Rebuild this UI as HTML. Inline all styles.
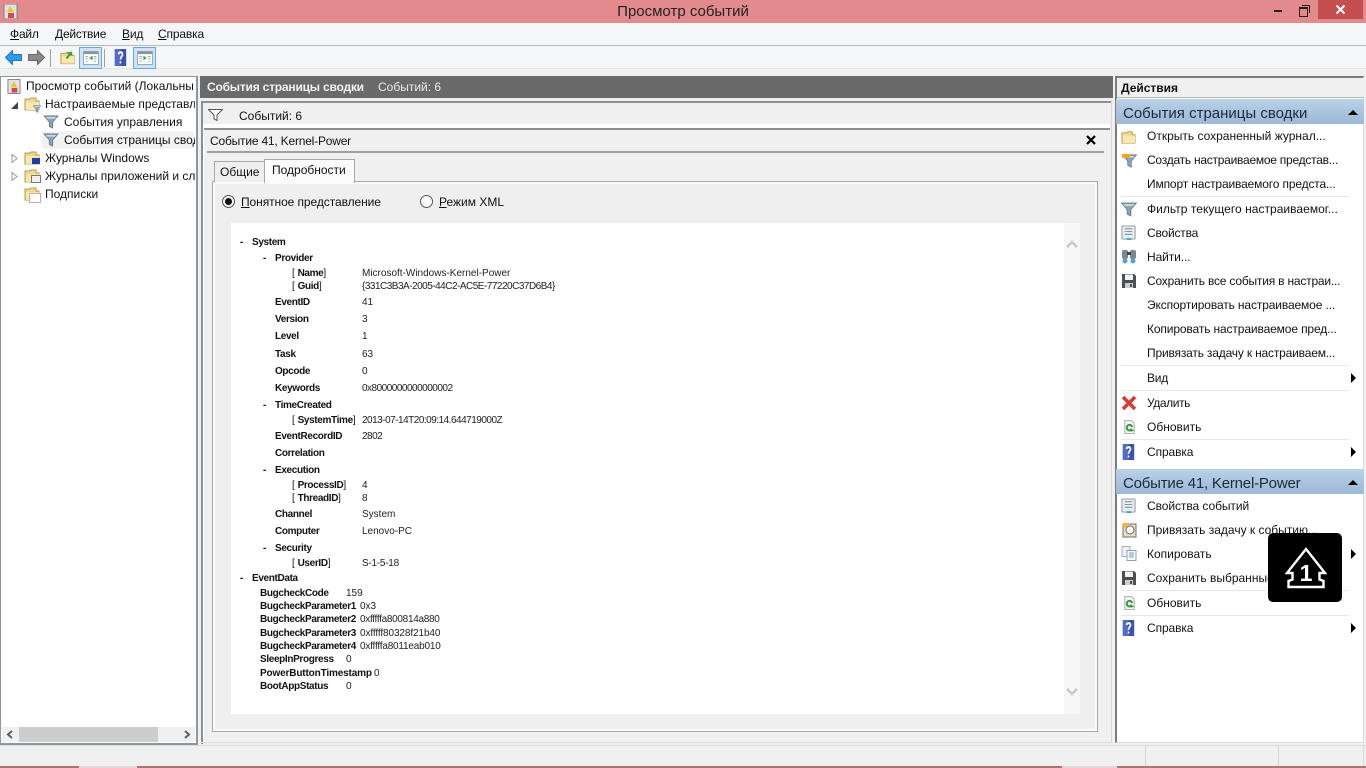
<!DOCTYPE html>
<html lang="ru"><head><meta charset="utf-8"><title>Просмотр событий</title>
<style>
html,body{margin:0;padding:0;width:1366px;height:768px;overflow:hidden;background:#f0f0f0}
body{position:relative;font:12px/16px "Liberation Sans","DejaVu Sans",sans-serif;color:#111}
.a,.t,.b,.v,svg{position:absolute}
.t,.b,.v{white-space:nowrap}
.b{font-weight:bold;font-size:10px;line-height:14px;color:#111;letter-spacing:-.35px}
.v{font-size:10px;line-height:14px;color:#222}
.d{letter-spacing:-.5px}
.b span{letter-spacing:0}
u{text-decoration:underline}
.sep{position:absolute;left:1121px;width:228px;height:1px;background:#e8e8e8}
.h{position:absolute;left:1116px;width:248px;height:25px;background:linear-gradient(#b9d1e8,#9db8d6)}
.h span{position:absolute;left:7px;top:6px;font-size:15px;line-height:18px;color:#1a2a3a;white-space:nowrap}
.tri{position:absolute;width:0;height:0;border-left:5px solid #000;border-top:5px solid transparent;border-bottom:5px solid transparent;left:1351px}
.up{position:absolute;left:1348px;width:0;height:0;border-left:5px solid transparent;border-right:5px solid transparent;border-bottom:5px solid #000}
</style></head><body>

<svg width="0" height="0" style="position:absolute">
<defs>
<symbol id="fun" viewBox="0 0 16 16"><path d="M0 1H16L10 8V15L6 13V8Z" fill="#8ba3b3" stroke="#56707f" stroke-width=".8"/><path d="M2 2.500H14L12.500 4H3.500Z" fill="#e4edf2"/></symbol>
<symbol id="fold" viewBox="0 0 16 16"><path d="M1 3H6L7 2H12V5H15V14H1Z" fill="#f2d88e" stroke="#b79b55"/><path d="M2 6H15V14H2Z" fill="#f8e7ae"/></symbol>
<symbol id="prop" viewBox="0 0 16 16"><rect x="1" y="1" width="14" height="14" rx="1" fill="#e8edf0" stroke="#8a949c"/><path d="M4 4H12M4 7H12M4 10H12" stroke="#7c8a96"/><rect x="6" y="14" width="5" height="2" fill="#39a9dc"/></symbol>
<symbol id="disk" viewBox="0 0 16 16"><path d="M1 1H13L15 3V15H1Z" fill="#4b4f52"/><rect x="4" y="1.500" width="8" height="5.500" fill="#f2f2f2"/><rect x="4" y="10" width="8" height="5" fill="#cfcfcf"/><rect x="9" y="11" width="2" height="3" fill="#4b4f52"/></symbol>
<symbol id="ref" viewBox="0 0 16 16"><path d="M3 1H10L13 4V15H3Z" fill="#f5f5f5" stroke="#a9a9a9"/><path d="M11 8A3 3 0 1 0 10 11" fill="none" stroke="#2a9d34" stroke-width="2"/><path d="M9 9L13 12L9 13Z" fill="#2a9d34"/></symbol>
<symbol id="hlp" viewBox="0 0 16 16"><rect x="1" width="14" height="16" fill="#3a53ad"/><rect x="1" width="7" height="16" fill="#4f6cc7"/><path d="M5.500 5C6 2.500 10.500 2.500 10.500 5C10.500 7 8 7 8 10" fill="none" stroke="#fff" stroke-width="2"/><rect x="7" y="11.500" width="2" height="2" fill="#fff"/></symbol>
<symbol id="win" viewBox="0 0 20 18"><rect x=".5" y=".5" width="19" height="17" fill="#fff" stroke="#858d93"/><rect x="1" y="1" width="18" height="3" fill="#8d959b"/><path d="M3 7H6M3 10H6M3 13H6M14 7H17M14 10H17M14 13H17" stroke="#7d93aa"/></symbol>
</defs>
</svg>

<!-- title bar -->
<div class="a" style="left:0;top:0;width:1366px;height:23px;background:#e28a8c"></div>
<svg style="left:3px;top:4px" width="15" height="15" viewBox="0 0 15 15"><rect x="1" y="0" width="13" height="15" fill="#dfe3e8" stroke="#7b8290"/><path d="M7 2L11 8H4Z" fill="#f5c518"/><rect x="5" y="9" width="6" height="5" fill="#d8484a"/></svg>
<div class="t" style="left:0;top:3px;width:1366px;text-align:center;font-size:15px;line-height:18px;color:#222">Просмотр событий</div>
<div class="a" style="left:1274px;top:10px;width:8px;height:2px;background:#222"></div>
<div class="a" style="left:1299px;top:7px;width:7px;height:7px;border:1px solid #222;border-top-width:2px"></div>
<div class="a" style="left:1302px;top:5px;width:7px;height:7px;border:1px solid #222;border-left:0;border-bottom:0"></div>
<div class="a" style="left:1318px;top:0;width:45px;height:19px;background:#c54e50"></div>
<svg style="left:1335px;top:4px" width="11" height="11" viewBox="0 0 11 11"><path d="M1.500 1.500L9.500 9.500M9.500 1.500L1.500 9.500" stroke="#fff" stroke-width="2"/></svg>

<!-- menu -->
<div class="a" style="left:0;top:23px;width:1366px;height:22px;background:#f5f6f7;border-bottom:1px solid #b9b9b9"></div>
<div class="t" style="left:10px;top:26px;letter-spacing:-.2px"><u>Ф</u>айл</div>
<div class="t" style="left:55px;top:26px;letter-spacing:-.2px"><u>Д</u>ействие</div>
<div class="t" style="left:122px;top:26px;letter-spacing:-.2px"><u>В</u>ид</div>
<div class="t" style="left:158px;top:26px;letter-spacing:-.15px"><u>С</u>правка</div>

<!-- toolbar -->
<div class="a" style="left:0;top:46px;width:1366px;height:22px;background:#f5f6f7;border-bottom:1px solid #e4e4e4"></div>
<svg style="left:5px;top:50px" width="17" height="15" viewBox="0 0 17 15"><path d="M0.500 7.500L7.500 .5V4.500H16.500V10.500H7.500V14.500Z" fill="#2f9be8" stroke="#1f78c8"/></svg>
<svg style="left:28px;top:50px" width="17" height="15" viewBox="0 0 17 15"><path d="M16.500 7.500L9.500 .5V4.500H.5V10.500H9.500V14.500Z" fill="#8a8a8a" stroke="#666"/></svg>
<div class="a" style="left:50px;top:49px;width:1px;height:18px;background:#a0a0a0"></div>
<svg style="left:60px;top:50px" width="15" height="16" viewBox="0 0 16 16"><use href="#fold"/><path d="M6 8L9 4L7 3L13 1L13 6L11 5L8 9Z" fill="#36a33a"/></svg>
<div class="a" style="left:79px;top:47px;width:21px;height:20px;background:#cde4f7;border:1px solid #66a7e8"></div>
<svg style="left:83px;top:51px" width="16" height="14" viewBox="0 0 20 18"><use href="#win"/><path d="M12 6V12L8 9Z" fill="#27a839"/></svg>
<div class="a" style="left:104px;top:49px;width:1px;height:18px;background:#a0a0a0"></div>
<svg style="left:114px;top:49px" width="13" height="17" viewBox="0 0 16 16" preserveAspectRatio="none"><use href="#hlp"/></svg>
<div class="a" style="left:133px;top:47px;width:21px;height:20px;background:#cde4f7;border:1px solid #66a7e8"></div>
<svg style="left:137px;top:51px" width="16" height="14" viewBox="0 0 20 18"><use href="#win"/><path d="M8 6V12L12 9Z" fill="#27a839"/></svg>

<!-- tree panel -->
<div class="a" style="left:0;top:76px;width:195px;height:666px;background:#fff;border:1px solid #8d979e;border-width:1px 2px 2px 1px"></div>
<svg style="left:7px;top:79px" width="14" height="15" viewBox="0 0 15 15"><rect x="1" y="0" width="13" height="15" fill="#dfe3e8" stroke="#7b8290"/><path d="M7 2L11 8H4Z" fill="#f5c518"/><rect x="5" y="9" width="6" height="5" fill="#d8484a"/></svg>
<div class="a" style="left:26px;top:78px;width:168px;height:16px;overflow:hidden"><span class="t" style="left:0;top:0">Просмотр событий (Локальны</span></div>
<div class="a" style="left:42px;top:131px;width:153px;height:18px;background:#f2f2f2"></div>
<svg style="left:11px;top:102px" width="7" height="7" viewBox="0 0 7 7"><path d="M7 0V7H0Z" fill="#444"/></svg>
<svg style="left:24px;top:96px" width="16" height="16"><use href="#fold"/></svg>
<svg style="left:33px;top:105px" width="8" height="8"><use href="#fun"/></svg>
<div class="a" style="left:45px;top:96px;width:150px;height:16px;overflow:hidden"><span class="t" style="left:0;top:0">Настраиваемые представле</span></div>
<svg style="left:43px;top:115px" width="16" height="14"><use href="#fun"/></svg>
<div class="t" style="left:64px;top:114px">События управления</div>
<svg style="left:43px;top:133px" width="16" height="14"><use href="#fun"/></svg>
<div class="a" style="left:64px;top:132px;width:131px;height:16px;overflow:hidden"><span class="t" style="left:0;top:0">События страницы свод</span></div>
<svg style="left:11px;top:154px" width="7" height="9" viewBox="0 0 7 9"><path d="M1 .5L6 4.500L1 8.500Z" fill="#fff" stroke="#9a9a9a"/></svg>
<svg style="left:24px;top:150px" width="16" height="16"><use href="#fold"/></svg>
<div class="a" style="left:32px;top:158px;width:8px;height:6px;background:#1d3fa8"></div>
<div class="t" style="left:45px;top:150px">Журналы Windows</div>
<svg style="left:11px;top:172px" width="7" height="9" viewBox="0 0 7 9"><path d="M1 .5L6 4.500L1 8.500Z" fill="#fff" stroke="#9a9a9a"/></svg>
<svg style="left:24px;top:168px" width="16" height="16"><use href="#fold"/></svg>
<div class="a" style="left:31px;top:175px;width:8px;height:6px;background:#f0f0f0;border:1px solid #777"></div>
<div class="a" style="left:45px;top:168px;width:150px;height:16px;overflow:hidden"><span class="t" style="left:0;top:0">Журналы приложений и сл</span></div>
<svg style="left:24px;top:186px" width="16" height="16"><use href="#fold"/></svg>
<div class="a" style="left:29px;top:193px;width:10px;height:8px;background:#fff;border:1px solid #c9a8a8"></div>
<div class="t" style="left:45px;top:186px">Подписки</div>
<!-- tree scrollbar -->
<div class="a" style="left:2px;top:727px;width:193px;height:15px;background:#f0f0f0"></div>
<div class="a" style="left:19px;top:727px;width:139px;height:15px;background:#cdcdcd"></div>
<svg style="left:6px;top:730px" width="8" height="9" viewBox="0 0 8 9"><path d="M6 1L2 4.500L6 8" fill="none" stroke="#606060" stroke-width="2"/></svg>
<svg style="left:183px;top:730px" width="8" height="9" viewBox="0 0 8 9"><path d="M2 1L6 4.500L2 8" fill="none" stroke="#606060" stroke-width="2"/></svg>

<!-- center -->
<div class="a" style="left:200px;top:76px;width:913px;height:22px;background:#6a6a6a"></div>
<div class="t" style="left:207px;top:79px;font-weight:bold;color:#f2f2f2;letter-spacing:-.2px">События страницы сводки</div>
<div class="t" style="left:378px;top:79px;color:#eaeaea">Событий: 6</div>
<div class="a" style="left:201px;top:101px;width:909px;height:641px;border:1px solid #8f8f8f;border-width:2px 0 0 2px"></div>
<div class="a" style="left:1111px;top:100px;width:1px;height:643px;background:#d8d8d8"></div>
<div class="a" style="left:201px;top:742px;width:911px;height:1px;background:#dcdcdc"></div>
<svg style="left:208px;top:109px" width="15" height="12" viewBox="0 0 15 12"><path d="M.5 .5H14.500L9 6V11.500L6 10V6Z" fill="#fff" stroke="#555"/></svg>
<div class="t" style="left:239px;top:108px">Событий: 6</div>
<div class="a" style="left:203px;top:124px;width:907px;height:4px;background:#fff"></div>
<div class="a" style="left:204px;top:128px;width:906px;height:2px;background:#8f8f8f"></div>
<div class="a" style="left:203px;top:128px;width:1px;height:610px;background:#fff"></div>
<div class="t" style="left:210px;top:133px;letter-spacing:-.2px">Событие 41, Kernel-Power</div>
<svg style="left:1086px;top:135px" width="10" height="10" viewBox="0 0 10 10"><path d="M1 1L9 9M9 1L1 9" stroke="#000" stroke-width="2.200"/></svg>
<div class="a" style="left:207px;top:151px;width:897px;height:2px;background:#a0a0a0"></div>
<div class="a" style="left:212px;top:181px;width:884px;height:549px;border:1px solid #a8a8a8;background:#efefef;box-shadow:inset 0 0 0 2px #fbfbfb"></div>
<div class="a" style="left:214px;top:161px;width:50px;height:20px;border:1px solid #a8a8a8;border-bottom:0;background:#efefef"></div>
<div class="t" style="left:220px;top:164px">Общие</div>
<div class="a" style="left:264px;top:159px;width:89px;height:23px;border:1px solid #a8a8a8;border-bottom:0;background:#fbfbfb"></div>
<div class="t" style="left:272px;top:162px">Подробности</div>
<div class="a" style="left:222px;top:195px;width:11px;height:11px;border:1px solid #555;border-radius:50%;background:#f2f2f2"></div>
<div class="a" style="left:225px;top:198px;width:7px;height:7px;border-radius:50%;background:#111"></div>
<div class="t" style="left:241px;top:194px;letter-spacing:-.08px"><u>П</u>онятное представление</div>
<div class="a" style="left:420px;top:195px;width:11px;height:11px;border:1px solid #555;border-radius:50%;background:#fff"></div>
<div class="t" style="left:439px;top:194px"><u>Р</u>ежим XML</div>

<div class="a" style="left:231px;top:223px;width:833px;height:491px;background:#fff"></div>
<div class="a" style="left:1064px;top:223px;width:16px;height:491px;background:#f7f7f7"></div>
<svg style="left:1066px;top:239px" width="12" height="9" viewBox="0 0 12 9"><path d="M1 8L6 3L11 8" fill="none" stroke="#c8c8c8" stroke-width="2.500"/></svg>
<svg style="left:1066px;top:688px" width="12" height="9" viewBox="0 0 12 9"><path d="M1 1L6 6L11 1" fill="none" stroke="#c8c8c8" stroke-width="2.500"/></svg>

<div class="b" style="left:240px;top:236px">-</div><div class="b" style="left:252px;top:236px">System</div>
<div class="b" style="left:263px;top:252px">-</div><div class="b" style="left:275px;top:252px">Provider</div>
<div class="b" style="left:292px;top:267px"><span style="font-weight:normal">[ </span>Name<span style="font-weight:normal">]</span></div><div class="v" style="left:362px;top:267px">Microsoft-Windows-Kernel-Power</div>
<div class="b" style="left:292px;top:280px"><span style="font-weight:normal">[ </span>Guid<span style="font-weight:normal">]</span></div><div class="v d" style="left:362px;top:280px">{331C3B3A-2005-44C2-AC5E-77220C37D6B4}</div>
<div class="b" style="left:275px;top:296px">EventID</div><div class="v" style="left:362px;top:296px">41</div>
<div class="b" style="left:275px;top:313px">Version</div><div class="v" style="left:362px;top:313px">3</div>
<div class="b" style="left:275px;top:330px">Level</div><div class="v" style="left:362px;top:330px">1</div>
<div class="b" style="left:275px;top:348px">Task</div><div class="v" style="left:362px;top:348px">63</div>
<div class="b" style="left:275px;top:365px">Opcode</div><div class="v" style="left:362px;top:365px">0</div>
<div class="b" style="left:275px;top:382px">Keywords</div><div class="v d" style="left:362px;top:382px">0x8000000000000002</div>
<div class="b" style="left:263px;top:399px">-</div><div class="b" style="left:275px;top:399px">TimeCreated</div>
<div class="b" style="left:292px;top:414px"><span style="font-weight:normal">[ </span>SystemTime<span style="font-weight:normal">]</span></div><div class="v d" style="left:362px;top:414px">2013-07-14T20:09:14.644719000Z</div>
<div class="b" style="left:275px;top:430px">EventRecordID</div><div class="v d" style="left:362px;top:430px">2802</div>
<div class="b" style="left:275px;top:447px">Correlation</div>
<div class="b" style="left:263px;top:464px">-</div><div class="b" style="left:275px;top:464px">Execution</div>
<div class="b" style="left:292px;top:479px"><span style="font-weight:normal">[ </span>ProcessID<span style="font-weight:normal">]</span></div><div class="v" style="left:362px;top:479px">4</div>
<div class="b" style="left:292px;top:492px"><span style="font-weight:normal">[ </span>ThreadID<span style="font-weight:normal">]</span></div><div class="v" style="left:362px;top:492px">8</div>
<div class="b" style="left:275px;top:508px">Channel</div><div class="v" style="left:362px;top:508px">System</div>
<div class="b" style="left:275px;top:525px">Computer</div><div class="v" style="left:362px;top:525px">Lenovo-PC</div>
<div class="b" style="left:263px;top:542px">-</div><div class="b" style="left:275px;top:542px">Security</div>
<div class="b" style="left:292px;top:557px"><span style="font-weight:normal">[ </span>UserID<span style="font-weight:normal">]</span></div><div class="v" style="left:362px;top:557px;letter-spacing:-.25px">S-1-5-18</div>
<div class="b" style="left:240px;top:572px">-</div><div class="b" style="left:252px;top:572px">EventData</div>
<div class="b" style="left:260px;top:587px">BugcheckCode</div><div class="v" style="left:346px;top:587px">159</div>
<div class="b" style="left:260px;top:600px">BugcheckParameter1</div><div class="v" style="left:360px;top:600px">0x3</div>
<div class="b" style="left:260px;top:613px">BugcheckParameter2</div><div class="v" style="left:360px;top:613px;letter-spacing:-.3px">0xfffffa800814a880</div>
<div class="b" style="left:260px;top:627px">BugcheckParameter3</div><div class="v" style="left:360px;top:627px;letter-spacing:-.1px">0xfffff80328f21b40</div>
<div class="b" style="left:260px;top:640px">BugcheckParameter4</div><div class="v" style="left:360px;top:640px;letter-spacing:-.2px">0xfffffa8011eab010</div>
<div class="b" style="left:260px;top:653px">SleepInProgress</div><div class="v" style="left:346px;top:653px">0</div>
<div class="b" style="left:260px;top:667px;letter-spacing:-.15px">PowerButtonTimestamp</div><div class="v" style="left:374px;top:667px">0</div>
<div class="b" style="left:260px;top:680px">BootAppStatus</div><div class="v" style="left:346px;top:680px">0</div>

<!-- actions panel -->
<div class="a" style="left:1115px;top:76px;width:249px;height:667px;background:#fff;border-left:2px solid #7c7c7c;border-top:2px solid #7c7c7c;border-right:1px solid #dcdcdc;border-bottom:1px solid #dcdcdc;box-sizing:border-box"></div>
<div class="a" style="left:1117px;top:78px;width:247px;height:19px;background:#f0f0f0;border-bottom:1px solid #b5b5b5"></div>
<div class="t" style="left:1121px;top:80px;font-weight:bold">Действия</div>

<div class="h" style="top:99px"><span>События страницы сводки</span></div><div class="up" style="top:110px"></div>
<svg style="left:1121px;top:130px" width="15" height="15"><use href="#fold"/></svg>
<div class="t" style="left:1147px;top:128px">Открыть сохраненный журнал...</div>
<svg style="left:1122px;top:154px" width="15" height="14"><use href="#fun"/></svg>
<div class="a" style="left:1122px;top:154px;width:8px;height:4px;background:#f5a623"></div>
<div class="t" style="left:1147px;top:152px;letter-spacing:-.25px">Создать настраиваемое представ...</div>
<div class="t" style="left:1147px;top:176px;letter-spacing:-.15px">Импорт настраиваемого предста...</div>
<div class="sep" style="top:196px"></div>
<svg style="left:1121px;top:202px" width="16" height="15"><use href="#fun"/></svg>
<div class="t" style="left:1147px;top:201px;letter-spacing:.03px">Фильтр текущего настраиваемог...</div>
<svg style="left:1121px;top:225px" width="15" height="15"><use href="#prop"/></svg>
<div class="t" style="left:1147px;top:225px;letter-spacing:-.2px">Свойства</div>
<svg style="left:1121px;top:249px" width="16" height="15" viewBox="0 0 16 15"><rect x="1" y="1" width="6" height="9" rx="2" fill="#7d8790"/><rect x="9" y="1" width="6" height="9" rx="2" fill="#7d8790"/><rect x="6" y="3" width="4" height="3" fill="#444"/><circle cx="4" cy="12" r="2.500" fill="#4aa3df"/><circle cx="12" cy="12" r="2.500" fill="#4aa3df"/></svg>
<div class="t" style="left:1147px;top:249px;letter-spacing:-.1px">Найти...</div>
<svg style="left:1121px;top:273px" width="16" height="16"><use href="#disk"/></svg>
<div class="t" style="left:1147px;top:273px;letter-spacing:-.2px">Сохранить все события в настраи...</div>
<div class="t" style="left:1147px;top:297px;letter-spacing:-.13px">Экспортировать настраиваемое ...</div>
<div class="t" style="left:1147px;top:321px;letter-spacing:-.13px">Копировать настраиваемое пред...</div>
<div class="t" style="left:1147px;top:345px;letter-spacing:-.18px">Привязать задачу к настраиваем...</div>
<div class="sep" style="top:365px"></div>
<div class="t" style="left:1147px;top:370px;letter-spacing:-.2px">Вид</div><div class="tri" style="top:373px"></div>
<div class="sep" style="top:390px"></div>
<svg style="left:1121px;top:395px" width="16" height="16" viewBox="0 0 16 16"><path d="M2 2L14 14M14 2L2 14" stroke="#d83a34" stroke-width="3.600"/></svg>
<div class="t" style="left:1147px;top:395px;letter-spacing:-.4px">Удалить</div>
<svg style="left:1122px;top:419px" width="15" height="16"><use href="#ref"/></svg>
<div class="t" style="left:1147px;top:419px">Обновить</div>
<div class="sep" style="top:439px"></div>
<svg style="left:1122px;top:444px" width="13" height="16" viewBox="0 0 16 16" preserveAspectRatio="none"><use href="#hlp"/></svg>
<div class="t" style="left:1147px;top:444px;letter-spacing:-.1px">Справка</div><div class="tri" style="top:447px"></div>

<div class="h" style="top:469px"><span style="letter-spacing:-.2px">Событие 41, Kernel-Power</span></div><div class="up" style="top:480px"></div>
<svg style="left:1121px;top:498px" width="15" height="15"><use href="#prop"/></svg>
<div class="t" style="left:1147px;top:498px;letter-spacing:-.07px">Свойства событий</div>
<svg style="left:1122px;top:522px" width="15" height="16" viewBox="0 0 15 16"><rect x="1" y="2" width="13" height="13" fill="#e7dcc5" stroke="#77705f"/><circle cx="8" cy="8" r="4" fill="#fff" stroke="#666"/><circle cx="3" cy="3" r="2.500" fill="#f5b52a"/></svg>
<div class="t" style="left:1147px;top:522px">Привязать задачу к событию...</div>
<svg style="left:1121px;top:546px" width="16" height="15" viewBox="0 0 16 15"><rect x="1" y=".5" width="8" height="10" fill="#eef2f5" stroke="#a5aeb6"/><rect x="6" y="4.500" width="9" height="10" fill="#fff" stroke="#8aa0b5"/><path d="M8 7H13M8 9H13M8 11H13" stroke="#6e9ac4"/></svg>
<div class="t" style="left:1147px;top:546px">Копировать</div><div class="tri" style="top:549px"></div>
<svg style="left:1121px;top:570px" width="16" height="16"><use href="#disk"/></svg>
<div class="t" style="left:1147px;top:570px">Сохранить выбранные</div>
<div class="sep" style="top:590px"></div>
<svg style="left:1122px;top:595px" width="15" height="16"><use href="#ref"/></svg>
<div class="t" style="left:1147px;top:595px">Обновить</div>
<div class="sep" style="top:615px"></div>
<svg style="left:1122px;top:620px" width="13" height="16" viewBox="0 0 16 16" preserveAspectRatio="none"><use href="#hlp"/></svg>
<div class="t" style="left:1147px;top:620px;letter-spacing:-.1px">Справка</div><div class="tri" style="top:623px"></div>

<!-- overlay badge -->
<div class="a" style="left:1268px;top:533px;width:74px;height:69px;background:#000;border-radius:5px"></div>
<svg style="left:1285px;top:547px" width="42" height="42" viewBox="0 0 42 42"><path d="M21 2L40 26H34.500V32.500L38.500 34V40H3.500V34L7.500 32.500V26H2Z" fill="none" stroke="#fff" stroke-width="2.400"/></svg>
<div class="t" style="left:1285px;top:560px;width:42px;text-align:center;font-weight:bold;font-size:23px;line-height:26px;color:#fff">1</div>

<!-- status + taskbar -->
<div class="a" style="left:0;top:745px;width:1366px;height:1px;background:#dcdcdc"></div>
<div class="a" style="left:1145px;top:746px;width:1px;height:20px;background:#d8d8d8"></div>
<div class="a" style="left:1278px;top:746px;width:1px;height:20px;background:#d8d8d8"></div>
<div class="a" style="left:1363px;top:746px;width:1px;height:20px;background:#d8d8d8"></div>
<div class="a" style="left:0;top:766px;width:1366px;height:2px;background:#b07273"></div>
<div class="a" style="left:79px;top:766px;width:58px;height:2px;background:#e6d5d5"></div>
<div class="a" style="left:1062px;top:766px;width:55px;height:2px;background:#e6d5d5"></div>
</body></html>
